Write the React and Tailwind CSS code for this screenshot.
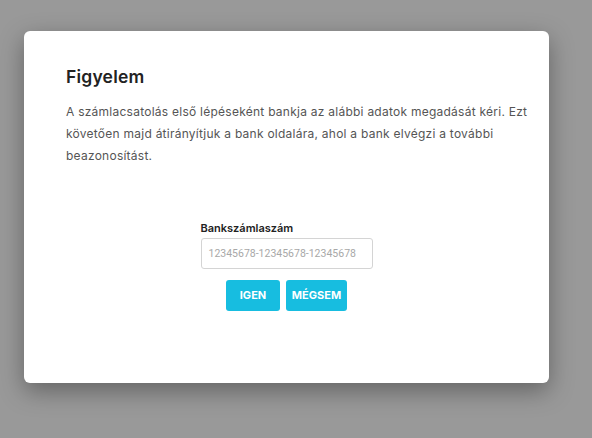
export default function App() {
  return (
    <div className="w-[592px] h-[438px] bg-[#999999] overflow-hidden pt-[31px] pl-[24px]" style={{ fontFamily: "Inter, 'Noto Sans', sans-serif" }}>
      <div className="w-[525px] h-[352px] bg-white rounded-[6px] shadow-[0_8px_24px_rgba(0,0,0,0.35)] pt-[34px] pl-[42px] pr-[10px]">
        <h2 className="text-[17.5px] font-semibold text-[#222] leading-[24px] tracking-[0.2px]">Figyelem</h2>
        <p className="mt-[12px] text-[12px] leading-[22px] text-[#555] w-[466px] tracking-[0.25px]">
          A számlacsatolás első lépéseként bankja az alábbi adatok megadását kéri. Ezt követően majd átirányítjuk a bank oldalára, ahol a bank elvégzi a további beazonosítást.
        </p>
        <div className="flex flex-col items-center mt-[54px] ml-[-42px] w-[525px]">
          <div className="w-[172px]">
            <label className="block text-[11px] font-semibold text-[#222] leading-[14px]">Bankszámlaszám</label>
            <div className="mt-[3px] h-[31px] border border-[#d4d4d4] rounded-[3px] flex items-center px-[7px] text-[10.5px] text-[#a8a8a8]" style={{ fontFamily: "Roboto, sans-serif" }}>
              12345678-12345678-12345678
            </div>
          </div>
          <div className="flex gap-[6px] mt-[11px]">
            <button className="w-[54px] h-[31px] bg-[#17bde0] rounded-[3px] text-white text-[11px] font-bold">IGEN</button>
            <button className="w-[61px] h-[31px] bg-[#17bde0] rounded-[3px] text-white text-[11px] font-bold">MÉGSEM</button>
          </div>
        </div>
      </div>
    </div>
  );
}
